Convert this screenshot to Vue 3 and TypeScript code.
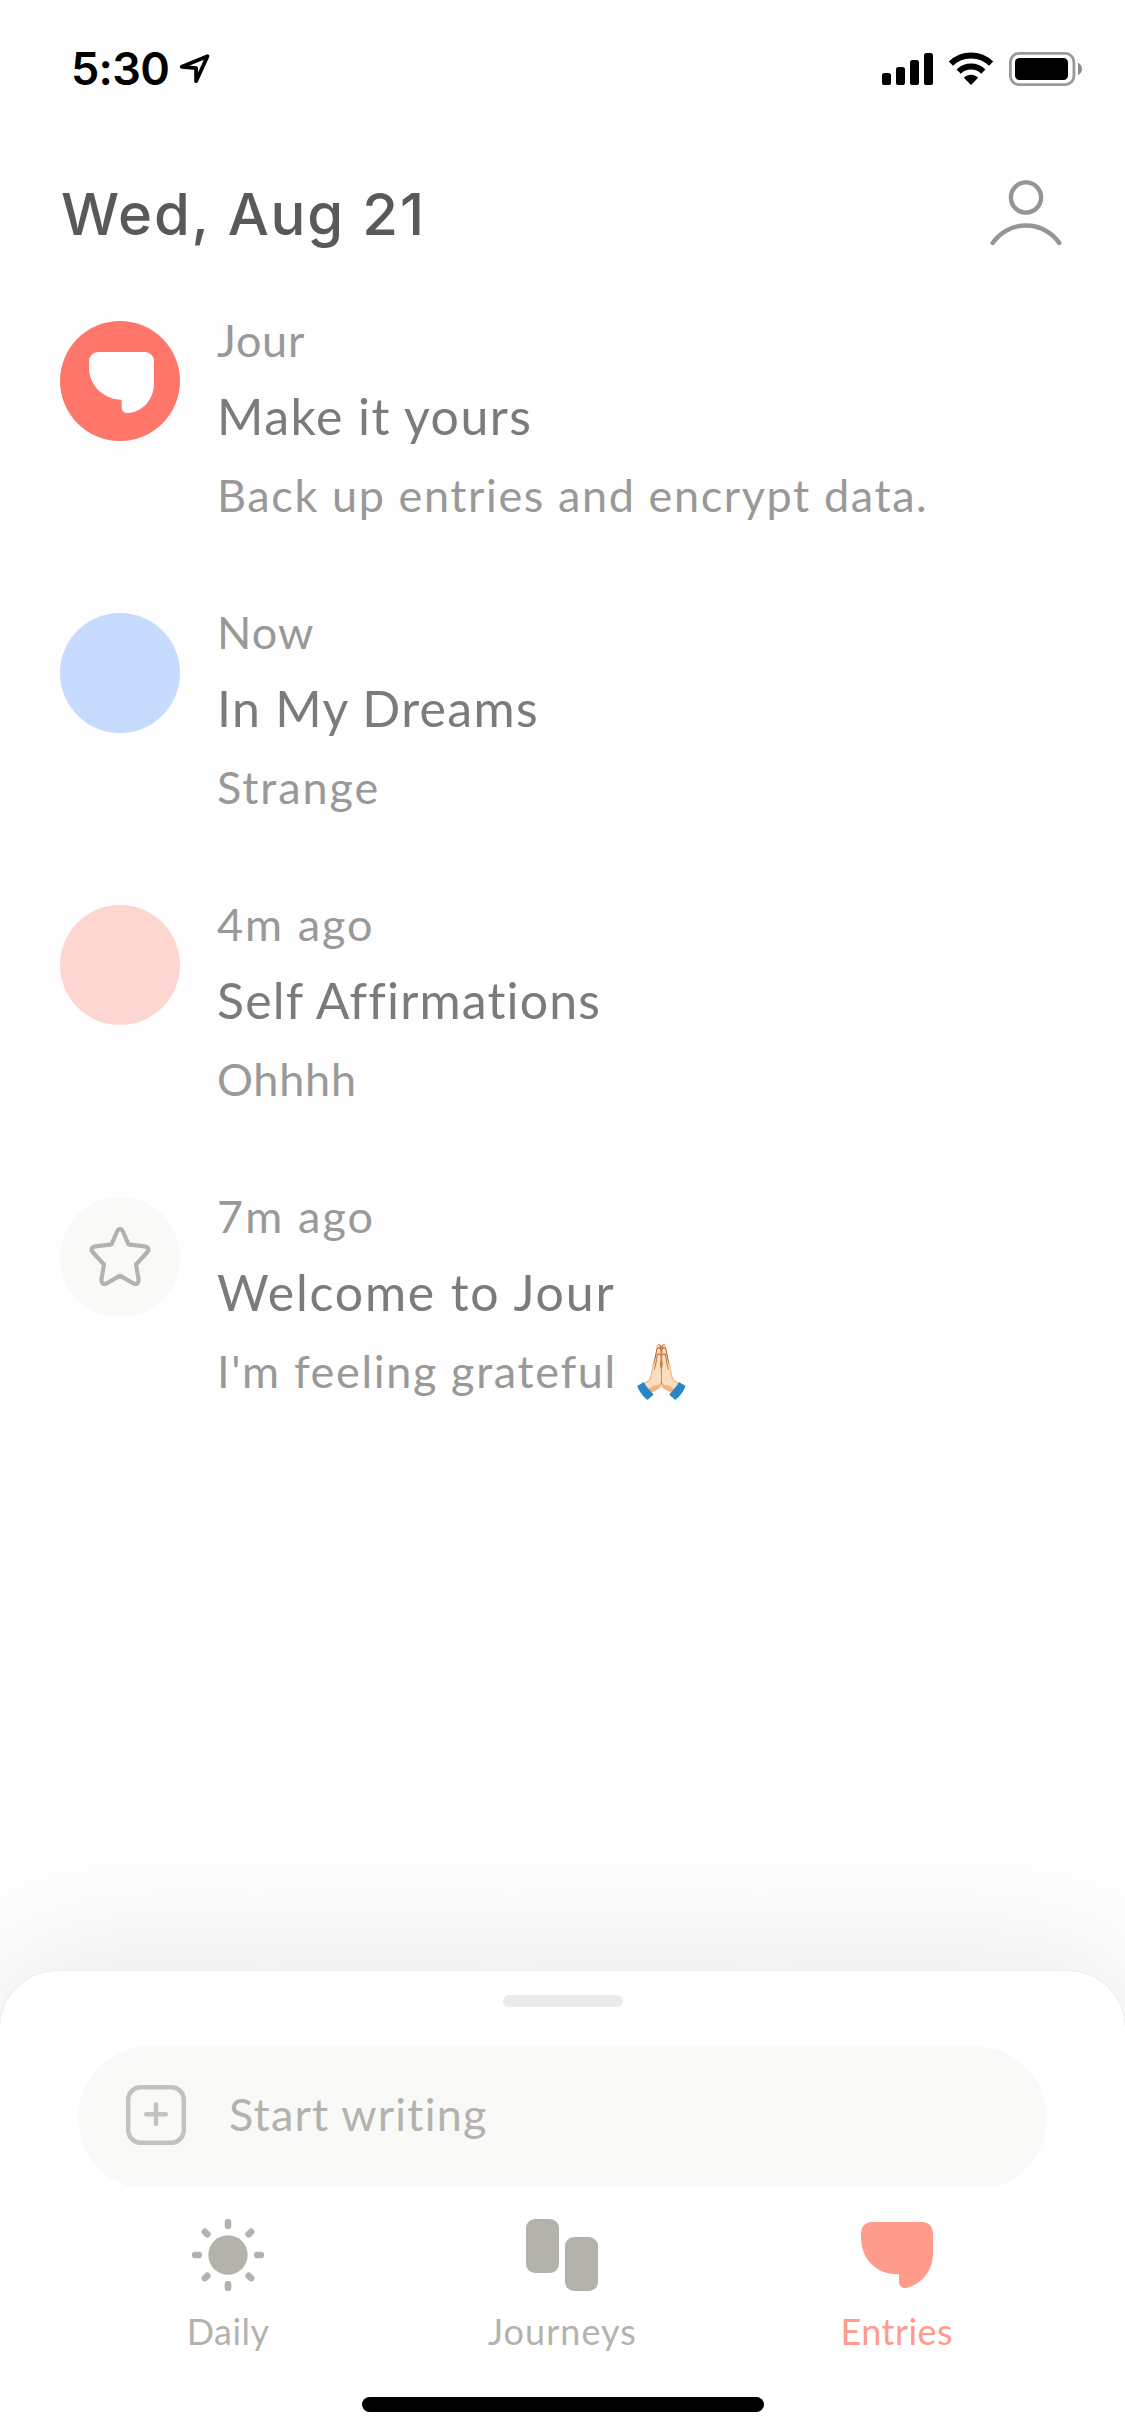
<script setup lang="ts">
type Icon = 'jour' | 'star' | 'none'

interface Line {
  text: string
  tracking: number
  emoji?: string
}

interface Entry {
  icon: Icon
  color: string
  time: Line
  title: Line
  body: Line
}

const entries: Entry[] = [
  {
    icon: 'jour',
    color: '#ff776b',
    time: { text: 'Jour', tracking: 0.7 },
    title: { text: 'Make it yours', tracking: 1.48 },
    body: { text: 'Back up entries and encrypt data.', tracking: 1.6 },
  },
  {
    icon: 'none',
    color: '#c7dbff',
    time: { text: 'Now', tracking: 1.07 },
    title: { text: 'In My Dreams', tracking: 1.3 },
    body: { text: 'Strange', tracking: 1.9 },
  },
  {
    icon: 'none',
    color: '#fdd6d1',
    time: { text: '4m ago', tracking: 2 },
    title: { text: 'Self Affirmations', tracking: 1.16 },
    body: { text: 'Ohhhh', tracking: 0.76 },
  },
  {
    icon: 'star',
    color: '#f9f9f8',
    time: { text: '7m ago', tracking: 2.1 },
    title: { text: 'Welcome to Jour', tracking: 1.8 },
    body: { text: "I'm feeling grateful", tracking: 1.65, emoji: '🙏🏻' },
  },
]

const rays = [0, 45, 90, 135, 180, 225, 270, 315]
</script>

<template>
  <div class="screen">
    <div class="status">
      <div class="clock">
        <span class="time">5:30</span>
        <svg class="location" width="34" height="34" viewBox="0 0 34 34">
          <path d="M29.500 4.200 3.700 14.800 18.100 16.200 18.100 29.200Z" fill="none" stroke="#000" stroke-width="3.800" stroke-linejoin="round" />
        </svg>
      </div>
      <div class="indicators">
        <svg width="51" height="34" viewBox="0 0 51 34">
          <rect x="0" y="21" width="9" height="12" rx="2.6" />
          <rect x="14" y="15" width="9" height="18" rx="2.6" />
          <rect x="28" y="8" width="9" height="25" rx="2.6" />
          <rect x="42" y="1" width="9" height="32" rx="2.6" />
        </svg>
        <svg class="wifi" width="46" height="34" viewBox="0 0 46 34">
          <path d="M2.9 11.7A28.7 28.7 0 0 1 43.1 11.7" fill="none" stroke="#000" stroke-width="6" />
          <path d="M10.7 19.6A17.6 17.6 0 0 1 35.3 19.6" fill="none" stroke="#000" stroke-width="6" />
          <path d="M23 33 16.6 26.4C16 25.8 16.2 25.2 16.8 24.8A11 11 0 0 1 29.2 24.8C29.8 25.2 30 25.8 29.4 26.4Z" />
        </svg>
        <svg class="battery" width="73" height="34" viewBox="0 0 73 34">
          <rect x="1.4" y="1.4" width="63.5" height="31.2" rx="8.5" fill="none" stroke="#999" stroke-width="2.8" />
          <rect x="6" y="6" width="53" height="22" rx="4.5" />
          <path d="M69 10.8C71.4 12 73 14.2 73 17S71.4 22 69 23.2Z" fill="#8c8c8c" />
        </svg>
      </div>
    </div>

    <header class="header">
      <h1>Wed, Aug 21</h1>
      <svg width="72" height="66" viewBox="0 0 72 66">
        <g fill="none" stroke="#969593" stroke-width="4.4" stroke-linecap="round">
          <circle cx="36" cy="17.5" r="15.1" />
          <path d="M2.7 63A40.5 40.5 0 0 1 69.3 63" />
        </g>
      </svg>
    </header>

    <main class="list">
      <article v-for="entry in entries" :key="entry.title.text" class="entry">
        <div class="avatar" :style="{ backgroundColor: entry.color }">
          <svg v-if="entry.icon === 'jour'" class="mark" width="65" height="61" viewBox="0 0 65 61">
            <path
              fill="#fff"
              d="M9 0H56A9 9 0 0 1 65 9V31C65 48 53 60.5 38.5 61C35 61 32.7 59 32.7 55.5V47.7H31C13 46.5 0 32 0 16V9A9 9 0 0 1 9 0Z"
            />
          </svg>
          <svg v-else-if="entry.icon === 'star'" width="120" height="120" viewBox="0 0 120 120">
            <path
              fill="none"
              stroke="#b3b3ac"
              stroke-width="4.2"
              stroke-linejoin="round"
              d="M57.3 34Q60 29.500 62.700 34L68.500 47.300 84.500 49.400Q90.500 50.800 87.500 55L76 67.500 78.600 82.500Q78.500 88.500 73.500 86.500L60 78.600 46.500 86.500Q41.500 88.500 41.400 82.500L44 67.500 32.500 55Q29.500 50.800 35.500 49.400L51.500 47.300Z"
            />
          </svg>
        </div>
        <div class="copy">
          <p class="when" :style="{ letterSpacing: entry.time.tracking + 'px' }">{{ entry.time.text }}</p>
          <h2 :style="{ letterSpacing: entry.title.tracking + 'px' }">{{ entry.title.text }}</h2>
          <p class="body" :style="{ letterSpacing: entry.body.tracking + 'px' }">
            {{ entry.body.text }}<span v-if="entry.body.emoji" class="emoji">{{ entry.body.emoji }}</span>
          </p>
        </div>
      </article>
    </main>

    <section class="sheet">
      <div class="handle"></div>
      <div class="field-clip">
        <div class="field">
          <svg width="60" height="60" viewBox="0 0 60 60">
            <g fill="none" stroke="#c3c2be" stroke-width="4.4">
              <rect x="2.2" y="2.2" width="55.6" height="55.6" rx="12.5" />
              <path d="M30 19.500V39M20.200 29.300H39.800" stroke-linecap="round" />
            </g>
          </svg>
          <span class="placeholder">Start writing</span>
        </div>
      </div>
      <nav class="tabs">
        <div class="tab">
          <svg width="72" height="72" viewBox="0 0 72 72" fill="#b3b3ac">
            <circle cx="36" cy="36" r="19.7" />
            <rect v-for="a in rays" :key="a" x="32.7" y="0" width="6.6" height="10" rx="3.1" :transform="`rotate(${a} 36 36)`" />
          </svg>
          <span class="daily">Daily</span>
        </div>
        <div class="tab">
          <svg width="72" height="72" viewBox="0 0 72 72" fill="#b3b3ac">
            <rect x="0" y="0" width="33" height="54" rx="9" />
            <rect x="39" y="18" width="33" height="54" rx="9" />
          </svg>
          <span class="journeys">Journeys</span>
        </div>
        <div class="tab active">
          <svg width="72" height="72" viewBox="0 0 72 72">
            <path
              fill="#ff9b8a"
              d="M10.5 3H61.5A10.5 10.5 0 0 1 72 13.5V35C72 51 61 65.5 44.5 69C40.5 69.3 38 66.5 38 62.5V55.2H36C15 55.2 0 39.5 0 18V13.5A10.5 10.5 0 0 1 10.5 3Z"
            />
          </svg>
          <span class="entries">Entries</span>
        </div>
      </nav>
      <div class="home"></div>
    </section>
  </div>
</template>

<style>
body {
  margin: 0;
  background: #fefefe;
}
</style>

<style scoped>
.screen {
  display: flex;
  flex-direction: column;
  width: 1125px;
  height: 2436px;
  overflow: hidden;
  background: #fefefe;
  font-family: Lato, 'Noto Sans', sans-serif;
}

svg {
  display: block;
  flex: none;
}

p,
h1,
h2 {
  margin: 0;
  white-space: nowrap;
}

.status {
  display: flex;
  justify-content: space-between;
  box-sizing: border-box;
  height: 132px;
  padding: 52px 43px 0 71px;
}

.clock,
.indicators {
  display: flex;
  align-items: flex-start;
}

.time {
  margin-top: -10px;
  font: 600 45px/54px Inter, sans-serif;
  letter-spacing: -0.7px;
}

.location {
  margin-left: 9px;
}

.wifi {
  margin-left: 15px;
}

.battery {
  margin-left: 15px;
}

.header {
  display: flex;
  align-items: flex-start;
  justify-content: space-between;
  box-sizing: border-box;
  height: 141px;
  margin-bottom: 48px;
  padding: 48px 63px 0 61px;
}

.header h1 {
  margin-top: -1px;
  color: #5a5957;
  font-family: Inter, sans-serif;
  font-size: 58px;
  font-weight: 500;
  line-height: 70px;
  letter-spacing: 1.81px;
}

.list {
  display: flex;
  flex: 1;
  flex-direction: column;
}

.entry {
  display: flex;
  height: 292px;
  padding-left: 60px;
}

.avatar {
  flex: none;
  width: 120px;
  height: 120px;
  border-radius: 50%;
}

.mark {
  margin: 31px 0 0 29px;
}

.copy {
  margin-left: 37px;
}

.when,
.body {
  color: #9a9997;
  font-size: 45px;
}

.when {
  line-height: 38px;
}

.copy h2 {
  margin-top: 27px;
  color: #7c7b79;
  font-size: 50px;
  font-weight: 400;
  line-height: 60px;
}

.body {
  display: flex;
  margin-top: 22px;
  line-height: 54px;
}

.emoji {
  margin-left: 12px;
  font-size: 52px;
  line-height: 50px;
  letter-spacing: 0;
}

.sheet {
  display: flex;
  flex: none;
  flex-direction: column;
  align-items: center;
  height: 465px;
  border-radius: 57px 57px 0 0;
  background: #fff;
  box-shadow: 0 0 155px rgba(0, 0, 0, 0.1), 0 0 1px rgba(0, 0, 0, 0.2);
}

.handle {
  width: 120px;
  height: 12px;
  margin-top: 24px;
  border-radius: 6px;
  background: #ebebea;
}

.field-clip {
  width: 969px;
  height: 141px;
  margin-top: 39px;
  overflow: hidden;
}

.field {
  display: flex;
  align-items: flex-start;
  box-sizing: border-box;
  height: 144px;
  padding: 39px 0 0 48px;
  border-radius: 72px;
  background: #f9f9f8;
}

.placeholder {
  margin: 2px 0 0 43px;
  color: #b3b3ac;
  font-size: 45px;
  line-height: 54px;
  letter-spacing: 1.2px;
}

.tabs {
  display: flex;
  width: 1003px;
  margin-top: 32px;
}

.tab {
  display: flex;
  flex: 1;
  flex-direction: column;
  align-items: center;
  color: #b3b3ac;
  font-size: 36px;
  line-height: 44px;
}

.tab span {
  margin-top: 18px;
}

.active {
  color: #ff9b8a;
}

.daily {
  letter-spacing: 0.5px;
}

.journeys {
  letter-spacing: 1.05px;
}

.entries {
  letter-spacing: 0.45px;
}

.home {
  width: 402px;
  height: 15px;
  margin-top: 44px;
  border-radius: 8px;
  background: #000;
}
</style>
